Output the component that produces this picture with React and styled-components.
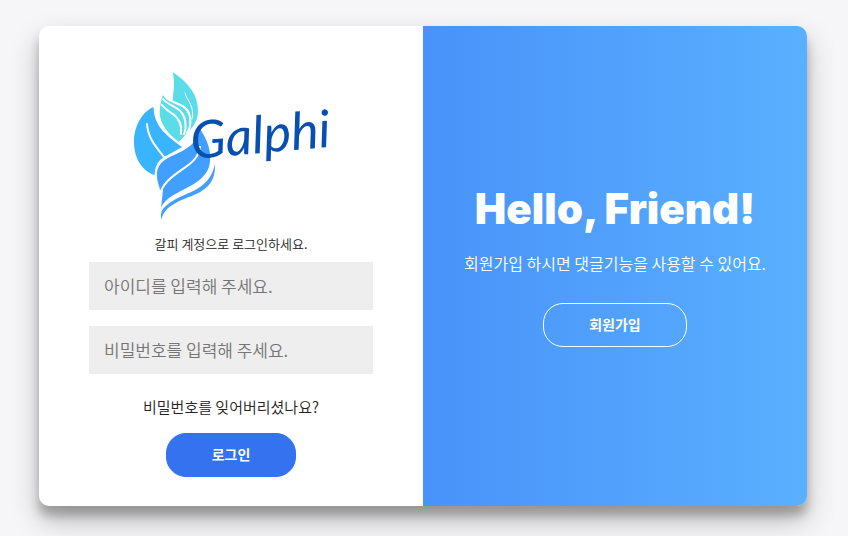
import React from "react";
import styled, { createGlobalStyle } from "styled-components";

const GlobalStyle = createGlobalStyle`
  * { box-sizing: border-box; }
  body {
    margin: 0;
    background: #f6f5f7;
    font-family: "Noto Sans CJK KR", sans-serif;
    color: #222;
  }
`;

const Page = styled.main`
  min-height: 100vh;
  display: flex;
  align-items: center;
  padding: 24px 41px 28px 39px;
`;

const Card = styled.div`
  display: grid;
  grid-template-columns: 1fr 1fr;
  width: 100%;
  max-width: 768px;
  min-height: 480px;
  margin: 0 auto;
  overflow: hidden;
  border-radius: 10px;
  background: #fff;
  box-shadow: 0 14px 28px rgba(0, 0, 0, 0.25), 0 10px 10px rgba(0, 0, 0, 0.22);
`;

const LoginForm = styled.form`
  display: flex;
  flex-direction: column;
  align-items: center;
  padding: 40px 50px 28px;
`;

const Logo = styled.svg`
  display: block;
  width: 210px;
  height: 160px;
  margin-bottom: 8px;
`;

const Caption = styled.span`
  font-size: 13px;
  line-height: 20px;
  font-weight: 350;
  margin-bottom: 8px;
`;

const Field = styled.input`
  width: 100%;
  height: 48px;
  margin-bottom: 16px;
  padding: 0 15px 2px;
  border: 0;
  border-radius: 0;
  background: #eee;
  font: inherit;
  font-size: 17px;
  font-weight: 350;
  color: #333;

  &::placeholder { color: #757575; opacity: 1; }
`;

const ForgotLink = styled.a`
  margin: 6px 0 15px;
  font-size: 15px;
  line-height: 22px;
  font-weight: 350;
  color: #222;
  text-decoration: none;
`;

const PillButton = styled.button`
  height: 44px;
  padding: 0 45px 2px;
  border: 1px solid ${(p) => (p.$ghost ? "#fff" : "#3572ef")};
  border-radius: 20px;
  background: ${(p) => (p.$ghost ? "transparent" : "#3572ef")};
  color: #fff;
  font: inherit;
  font-size: 14px;
  font-weight: 700;
  cursor: pointer;
`;

const Welcome = styled.section`
  display: flex;
  flex-direction: column;
  align-items: center;
  justify-content: center;
  padding: 0 32px;
  background: linear-gradient(to right, #4892f9, #5ab0ff);
  color: #fff;
  text-align: center;
`;

const Title = styled.h1`
  margin: 0 0 18px;
  font-family: Inter, sans-serif;
  font-size: 42px;
  line-height: 48px;
  font-weight: 900;
`;

const Message = styled.p`
  margin: 0 0 28px;
  font-size: 16px;
  line-height: 24px;
  font-weight: 350;
`;

const GalphiLogo = () => (
  <Logo viewBox="126 66 210 160" role="img" aria-label="Galphi">
    <path fill="#39b4ff" d="M153.500 107 C142 112 134 126 134 142 C134 158 142 171 154.500 175 C155 168 157 161 164 157 C171 153 177 150 182 147 C169 137 154 128 153.500 107Z" />
    <path fill="none" stroke="#fff" strokeWidth="2" strokeLinecap="round" d="M147 124 C148 139 157 148 164 157" />
    <path fill="#5adde8" d="M172.700 72 C189 83 198 95 198 111 C198 125 189 130 179 142 C165 132 157 119 160.500 105 C161 101 162 97 163 94 C165 98 169 100 173 102 C172 94 176 88 172.700 72Z" />
    <g fill="none" stroke="#fff" strokeLinecap="round">
      <path strokeWidth="2" d="M164 95 C169 105 187 101 190 117 C191 124 190 129 187 133" />
      <path strokeWidth="2" d="M163 99 C169 107 182 106 185 120 C186 126 186 130 184 134" />
      <path strokeWidth="2" d="M162 105 C168 113 179 114 181 127 L181 134" />
      <path strokeWidth="1" d="M185 93 C187 101 195 106 192 119" />
    </g>
    <path fill="#419fff" d="M200 129 C198 143 187 149 174 155 C162 160 156 166 157 177 C157 182 160 187 160 191 L163 190 L161 208 C168 190 201 189 209 167 C213 153 207 139 200 129Z" />
    <path fill="none" stroke="#fff" strokeWidth="2" d="M159 197 C165 170 199 169 200 146" />
    <path fill="#419fff" d="M215 164 C217 204 168 191 161.500 220 C160 212 162 209 167 205 C183 191 209 193 215 164Z" />
    <text x="192" y="159" transform="rotate(-5 192 159)" fill="#0750b0" fontFamily="Lato, sans-serif" fontStyle="italic" fontSize="52">Galphi</text>
  </Logo>
);

export default function App() {
  return (
    <>
      <GlobalStyle />
      <Page>
        <Card>
          <LoginForm onSubmit={(e) => e.preventDefault()}>
            <GalphiLogo />
            <Caption>갈피 계정으로 로그인하세요.</Caption>
            <Field type="text" aria-label="아이디" placeholder="아이디를 입력해 주세요." />
            <Field type="password" aria-label="비밀번호" placeholder="비밀번호를 입력해 주세요." />
            <ForgotLink href="#">비밀번호를 잊어버리셨나요?</ForgotLink>
            <PillButton type="submit">로그인</PillButton>
          </LoginForm>
          <Welcome>
            <Title>Hello, Friend!</Title>
            <Message>회원가입 하시면 댓글기능을 사용할 수 있어요.</Message>
            <PillButton type="button" $ghost>회원가입</PillButton>
          </Welcome>
        </Card>
      </Page>
    </>
  );
}
